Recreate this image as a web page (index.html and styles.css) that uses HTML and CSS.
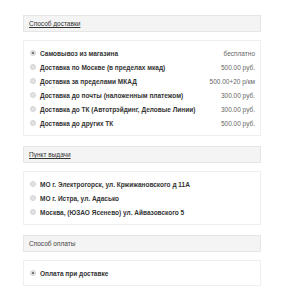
FILE: index.html
```html
<!DOCTYPE html>
<html lang="ru">
<head>
    <meta charset="UTF-8">
    <meta name="viewport" content="width=device-width, initial-scale=1.0">
    <title>Оформление заказа</title>
    <link rel="stylesheet" href="styles.css">
</head>
<body>
    <div class="checkout">
        <div class="section">
            <div class="section-title"><a href="#">Способ доставки</a></div>
            <div class="options">
                <label class="option">
                    <span class="radio checked"></span>
                    <span class="option-name">Самовывоз из магазина</span>
                    <span class="option-price">бесплатно</span>
                </label>
                <label class="option">
                    <span class="radio"></span>
                    <span class="option-name">Доставка по Москве (в пределах мкад)</span>
                    <span class="option-price">500.00 руб.</span>
                </label>
                <label class="option">
                    <span class="radio"></span>
                    <span class="option-name">Доставка за пределами МКАД</span>
                    <span class="option-price">500.00+20 р/км</span>
                </label>
                <label class="option">
                    <span class="radio"></span>
                    <span class="option-name">Доставка до почты (наложенным платежом)</span>
                    <span class="option-price">300.00 руб.</span>
                </label>
                <label class="option">
                    <span class="radio"></span>
                    <span class="option-name">Доставка до ТК (Автотрэйдинг, Деловые Линии)</span>
                    <span class="option-price">300.00 руб.</span>
                </label>
                <label class="option">
                    <span class="radio"></span>
                    <span class="option-name">Доставка до других ТК</span>
                    <span class="option-price">500.00 руб.</span>
                </label>
            </div>
        </div>

        <div class="section">
            <div class="section-title"><a href="#">Пункт выдачи</a></div>
            <div class="options">
                <label class="option">
                    <span class="radio"></span>
                    <span class="option-name">МО г. Электрогорск, ул. Кржижановского д 11А</span>
                </label>
                <label class="option">
                    <span class="radio"></span>
                    <span class="option-name">МО г. Истра, ул. Адасько</span>
                </label>
                <label class="option">
                    <span class="radio"></span>
                    <span class="option-name">Москва, (ЮЗАО Ясенево) ул. Айвазовского 5</span>
                </label>
            </div>
        </div>

        <div class="section">
            <div class="section-title">Способ оплаты</div>
            <div class="options">
                <label class="option">
                    <span class="radio checked"></span>
                    <span class="option-name">Оплата при доставке</span>
                </label>
            </div>
        </div>
    </div>
</body>
</html>
```

FILE: styles.css
```css
body {
    margin: 0;
    padding: 0;
    background: #fff;
    color: #333;
    font-family: "Liberation Sans", Arial, sans-serif;
    font-size: 6.5px;
}

.checkout {
    width: 238px;
    padding: 15px 0 0 23px;
}

.section {
    margin-bottom: 10px;
}

.section-title {
    height: 15px;
    line-height: 15px;
    padding-left: 5px;
    background: #f4f4f4;
    border: 1px solid #e6e6e6;
    color: #444;
    margin-bottom: 8px;
}

.section-title a {
    color: #333;
    text-decoration: underline;
}

.options {
    border: 1px solid #efefef;
    padding: 5px 5px 5px 6px;
}

.option {
    display: flex;
    align-items: center;
    height: 14px;
    font-weight: bold;
    color: #333;
}

.radio {
    width: 4px;
    height: 4px;
    border-radius: 50%;
    background: #e2e2e2;
    border: 1px solid #d4d4d4;
    margin-right: 4px;
    position: relative;
}

.radio.checked::after {
    content: "";
    position: absolute;
    left: 1px;
    top: 1px;
    width: 2px;
    height: 2px;
    border-radius: 50%;
    background: #555;
}

.option-name {
    flex: 1;
}

.option-price {
    font-weight: normal;
    color: #666;
}
```
